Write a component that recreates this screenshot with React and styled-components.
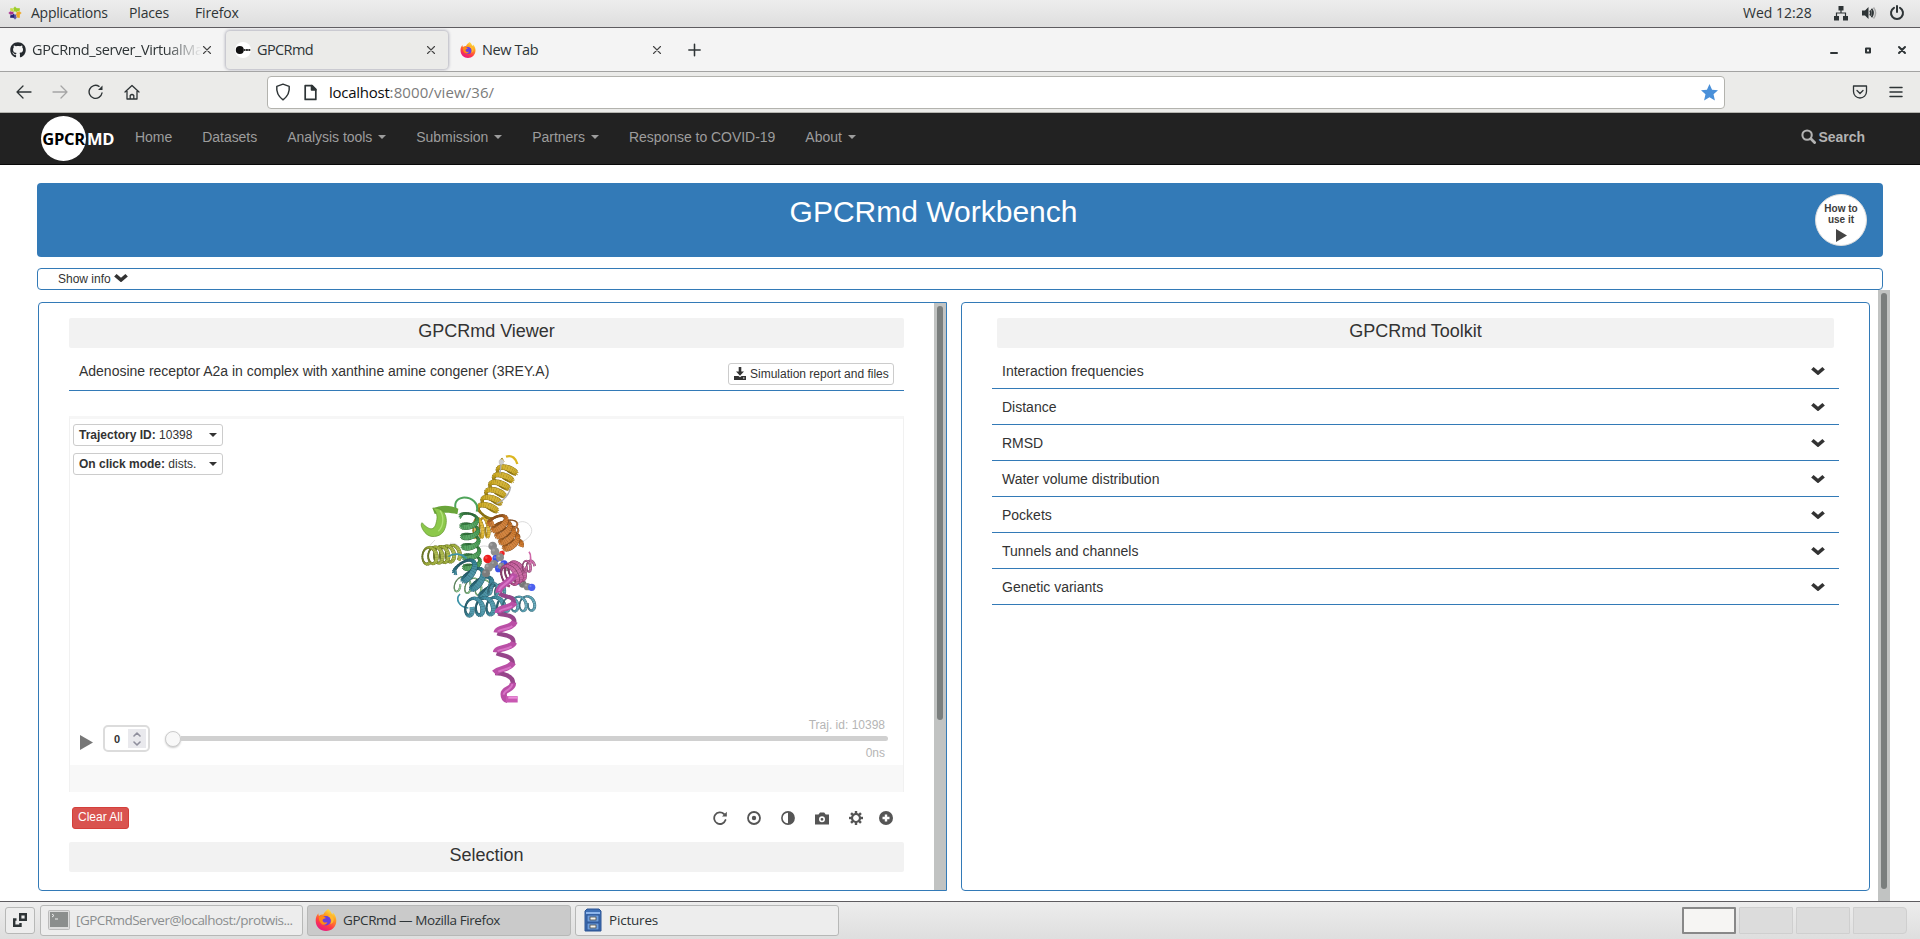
import React from "react";
import styled, { createGlobalStyle } from "styled-components";
import { FaGithub } from "react-icons/fa";

const BLUE = "#337ab7";
const UI_FONT = `"Open Sans", "Noto Sans", sans-serif`;
const WEB_FONT = `"Liberation Sans", Arial, sans-serif`;

const Global = createGlobalStyle`
  *, *::before, *::after { box-sizing: border-box; }
  html, body { margin: 0; padding: 0; background: #fff; overflow: hidden; }
  svg { display: block; flex: none; }
`;

const Desktop = styled.div`
  width: 1920px;
  height: 939px;
  display: flex;
  flex-direction: column;
  overflow: hidden;
  font-family: ${UI_FONT};
  color: #2e3436;
`;

/* ---------- desktop top bar ---------- */
const TopBar = styled.header`
  height: 28px;
  flex: none;
  display: flex;
  align-items: center;
  padding: 0 15px 2px 8px;
  background: linear-gradient(#ededed, #dedede);
  border-bottom: 1px solid #5e5c60;
  font-size: 14px;
`;
const MenuLabel = styled.span`
  width: ${(p) => p.$w}px;
  margin-left: ${(p) => p.$ml || 0}px;
  margin-right: ${(p) => p.$gap || 0}px;
  letter-spacing: ${(p) => p.$ls || 0}px;
  white-space: nowrap;
`;
const Spacer = styled.div`
  flex: ${(p) => (p.$w ? "none" : 1)};
  width: ${(p) => p.$w || 0}px;
`;
const Tray = styled.div`
  display: flex;
  align-items: center;
  gap: 12px;
`;

/* ---------- browser chrome ---------- */
const TabStrip = styled.div`
  height: 44px;
  flex: none;
  display: flex;
  align-items: center;
  background: #f4f4f4;
  border-bottom: 1px solid #a3a3a2;
  padding: 0 13px 0 1px;
`;
const Tab = styled.div`
  width: ${(p) => p.$w || 225}px;
  height: 38px;
  display: flex;
  align-items: center;
  padding: 0 ${(p) => p.$pr || 14}px 0 9px;
  margin-left: ${(p) => p.$ml || 0}px;
  gap: 6px;
  border-radius: 4px;
  font-size: 14.5px;
  background: ${(p) => (p.$active ? "#ebebe9" : "transparent")};
  box-shadow: ${(p) => (p.$active ? "0 0 3px 1px #b4b4be" : "none")};
`;
const TabTitle = styled.span`
  flex: 1;
  min-width: 0;
  white-space: nowrap;
  letter-spacing: ${(p) => p.$ls ?? -0.5}px;
  ${(p) => p.$fade && "mask-image: linear-gradient(90deg, #000 78%, transparent 100%); margin-right: -6px;"}
`;
const WindowButtons = styled.div`
  display: flex;
  align-items: center;
  gap: 24px;
`;
const UrlRow = styled.div`
  height: 41px;
  flex: none;
  display: flex;
  align-items: center;
  padding: 0 17px 0 16px;
  background: #ebebe9;
  border-bottom: 1px solid #b5b5b0;
`;
const NavIcons = styled.div`
  width: 251px;
  display: flex;
  gap: 20px;
`;
const UrlBox = styled.div`
  width: 1458px;
  height: 33px;
  display: flex;
  align-items: center;
  padding: 0 6px;
  background: #fff;
  border: 1px solid #b3b3ae;
  border-radius: 4px;
  font-size: 15px;
  color: #7b7b7b;
`;
const Url = styled.span`
  flex: 1;
  margin-left: 10px;
  letter-spacing: 0.1px;
  b { font-weight: 400; color: #0c0c0d; letter-spacing: -0.25px; }
`;

/* ---------- site ---------- */
const SiteNav = styled.nav`
  height: 52px;
  flex: none;
  display: flex;
  align-items: center;
  padding: 0 55px 4px 41px;
  background: #222;
  border-bottom: 1px solid #080808;
  font-family: ${WEB_FONT};
  font-size: 14px;
  color: #9d9d9d;
`;
const Logo = styled.div`
  display: flex;
  align-items: center;
  width: 79px;
  height: 45px;
  margin-top: 3px;
  font: 700 16.5px ${UI_FONT};
  letter-spacing: -0.3px;
  color: #fff;
`;
const LogoDisc = styled.span`
  width: 45px;
  height: 45px;
  border-radius: 50%;
  background: #fff;
  color: #000;
  display: flex;
  align-items: center;
  justify-content: center;
  margin-right: 1px;
`;
const NavLink = styled.a`
  display: flex;
  align-items: center;
  padding: 0 15px;
  white-space: nowrap;
  letter-spacing: -0.035px;
`;
const Caret = styled.i`
  border: 4px solid transparent;
  border-top-color: ${(p) => p.$color || "#9d9d9d"};
  border-bottom: 0;
  margin-left: ${(p) => p.$ml ?? 6}px;
`;
const SearchLink = styled(NavLink)`
  font-weight: 700;
  gap: 3px;
  padding: 0;
  color: #b3b3b3;
`;

const Page = styled.main`
  height: 736px;
  flex: none;
  display: flex;
  flex-direction: column;
  padding: 18px 0 0 37px;
  background: #fff;
  font-family: ${WEB_FONT};
  font-size: 14px;
  color: #333;
`;
const Banner = styled.section`
  width: 1846px;
  height: 74px;
  flex: none;
  display: flex;
  padding: 11px 16px 11px 15px;
  background: ${BLUE};
  border-radius: 4px;
`;
const BannerTitle = styled.h1`
  flex: 1;
  margin: 0;
  text-align: center;
  color: #fff;
  font: 400 30px/36px ${WEB_FONT};
`;
const HowTo = styled.button`
  width: 52px;
  height: 52px;
  border-radius: 50%;
  border: 1px solid #ddd;
  background: #fff;
  color: #3c3c3c;
  padding: 4px 0 0;
  font: 700 10px/11px ${WEB_FONT};
  display: flex;
  flex-direction: column;
  align-items: center;
  justify-content: center;
  svg { margin-top: 4px; }
`;
const InfoBox = styled.section`
  width: 1846px;
  height: 22px;
  flex: none;
  margin-top: 11px;
  padding: 0 20px 1px;
  display: flex;
  align-items: center;
  gap: 3px;
  border: 1px solid ${BLUE};
  border-radius: 4px;
  font-size: 12px;
  svg { margin-bottom: 2px; }
`;
const Workspace = styled.div`
  flex: 1;
  width: 1853px;
  display: flex;
  align-items: flex-start;
  padding-left: 1px;
`;
const Panel = styled.section`
  width: ${(p) => p.$w}px;
  height: 589px;
  margin: 12px ${(p) => p.$mr}px 0 0;
  display: flex;
  border: 1px solid ${BLUE};
  border-radius: ${(p) => (p.$scroll ? "4px 0 0 4px" : "4px")};
`;
const PanelBody = styled.div`
  flex: 1;
  min-width: 0;
  padding: 15px ${(p) => p.$pad}px 0;
`;
const ScrollTrack = styled.div`
  width: ${(p) => p.$w}px;
  align-self: stretch;
  display: flex;
  justify-content: center;
  padding-top: 3px;
  background: #c1c3c2;
`;
const ScrollThumb = styled.div`
  width: ${(p) => p.$w}px;
  height: ${(p) => p.$h}px;
  border-radius: 4px;
  background: #7a7e7d;
`;
const Heading = styled.h2`
  height: 30px;
  margin: ${(p) => p.$m || "0"};
  border-radius: 2px;
  background: #f2f2f2;
  text-align: center;
  font: 400 18px/27px ${WEB_FONT};
`;
const SystemRow = styled.div`
  height: 43px;
  display: flex;
  justify-content: space-between;
  padding: 0 10px;
  border-bottom: 1px solid ${BLUE};
  line-height: 46px;
  letter-spacing: -0.015px;
`;
const SmallButton = styled.button`
  width: ${(p) => p.$w}px;
  height: 22px;
  display: flex;
  align-items: center;
  padding: 0 5px ${(p) => p.$pb ?? 1}px;
  margin: ${(p) => p.$m || "0"};
  border: 1px solid ${(p) => (p.$danger ? "#d43f3a" : "#ccc")};
  border-radius: 3px;
  background: ${(p) => (p.$danger ? "#d9534f" : "#fff")};
  color: ${(p) => (p.$danger ? "#fff" : "#333")};
  font: 12px ${WEB_FONT};
  white-space: pre;
`;
const Viewer = styled.div`
  height: 376px;
  margin-top: 25px;
  border: 1px solid #f1f1f1;
  border-top: 3px solid #f6f6f6;
  border-bottom: 0;
  display: flex;
  flex-direction: column;
`;
const Stage = styled.div`
  height: 299px;
  display: flex;
  padding: 5px 3px 0;
`;
const StageControls = styled.div`
  width: 307px;
  display: flex;
  flex-direction: column;
  gap: 7px;
`;
const StageCanvas = styled.div`padding-top: 16px;`;
const Player = styled.div`
  height: 47px;
  display: flex;
  align-items: center;
  padding: 0 15px 6px 10px;
`;
const FrameInput = styled.div`
  width: 47px;
  height: 27px;
  margin: 0 15px 0 10px;
  display: flex;
  align-items: center;
  justify-content: flex-end;
  padding: 2px;
  border: 2px solid #dcdcdc;
  border-radius: 5px;
  font-weight: 700;
  font-size: 11px;
`;
const Spin = styled.div`
  width: 18px;
  height: 19px;
  margin-left: 8px;
  background: #e9e9ed;
  display: flex;
  flex-direction: column;
  align-items: center;
  justify-content: center;
  gap: 2px;
`;
const Timeline = styled.div`
  flex: 1;
  display: flex;
  flex-direction: column;
  font-size: 12px;
  line-height: 14px;
  color: #b5b5b5;
  text-align: right;
`;
const TimeText = styled.span`padding-right: 3px; height: 14px;`;
const Slider = styled.div`
  height: 14px;
  display: flex;
  align-items: center;
`;
const Knob = styled.div`
  width: 16px;
  height: 16px;
  border-radius: 50%;
  background: #f8f8f8;
  border: 1px solid #ccc;
  box-shadow: 0 1px 2px #ccc;
`;
const Rail = styled.div`
  flex: 1;
  height: 5px;
  border-radius: 0 3px 3px 0;
  background: #d0d0d0;
`;
const ViewerFoot = styled.div`
  height: 27px;
  background: #f8f8f8;
`;
const ActionRow = styled.div`
  height: 50px;
  display: flex;
  align-items: center;
  padding: 2px 11px 0 3px;
`;
const Actions = styled.div`
  display: flex;
  gap: 20px;
  color: #555;
  svg:last-child { margin-left: -4px; }
`;
const ToolRow = styled.div`
  height: 36px;
  display: flex;
  align-items: center;
  justify-content: space-between;
  padding: 0 14px 0 10px;
  border-bottom: 1px solid ${BLUE};
`;
const ToolList = styled.div`
  padding-top: 5px;
`;

/* ---------- task bar ---------- */
const TaskBar = styled.footer`
  height: 38px;
  flex: none;
  display: flex;
  align-items: center;
  padding: 0 13px 1px 5px;
  gap: 4px;
  background: linear-gradient(#ededed, #dedede);
  border-top: 1px solid #5e5c60;
`;
const Task = styled.div`
  width: ${(p) => p.$w}px;
  height: ${(p) => p.$h || 31}px;
  margin-right: ${(p) => p.$mr || 0}px;
  display: flex;
  align-items: center;
  gap: 6px;
  padding: 0 7px;
  border: 1px solid #b7b8b7;
  border-radius: 3px;
  background: ${(p) => (p.$active ? "#cacaca" : "#ededed")};
  color: ${(p) => (p.$dim ? "#8b8e8f" : "#2e3436")};
  font-size: 13.5px;
  letter-spacing: ${(p) => p.$ls ?? -0.2}px;
  white-space: nowrap;
`;
const Desk = styled.div`
  width: 54px;
  height: 27px;
  margin-left: -1px;
  border: ${(p) => (p.$on ? "2px solid #888" : "1px solid #cfcfcf")};
  background: ${(p) => (p.$on ? "#f6f5f3" : "#dcdcdc")};
  border-radius: ${(p) => (p.$last ? "0 4px 4px 0" : "1px")};
`;

/* ---------- icons ---------- */
const Line = ({ s = 16, vb = 16, w = 1.3, color = "#2e3436", children }) => (
  <svg width={s} height={s} viewBox={`0 0 ${vb} ${vb}`} fill="none" stroke={color} strokeWidth={w} strokeLinecap="round" strokeLinejoin="round">{children}</svg>
);
const CloseX = () => <Line s={10} vb={10} w={1.1} color="#444"><path d="M1.500 1.500l7 7M8.500 1.500l-7 7" /></Line>;
const Chevron = ({ w = 14 }) => (
  <svg width={w} height={w * 0.7} viewBox="0 0 14 10"><path d="M0 3.500L2.500 1l4.500 3.800L11.500 1 14 3.500 7 9.500z" fill="#333" /></svg>
);
const CentOS = () => (
  <svg width="14" height="14" viewBox="-7 -7 14 14">
    {["#9ccd2a", "#efa724", "#5a56a8", "#a83290"].map((c, i) => (
      <g key={c} transform={`rotate(${i * 90})`}>
        <rect x="-4.800" y="-4.800" width="4" height="4" fill={["#c8d94a", "#9ccd2a", "#efa724", "#262577"][i]} />
        <path d="M0-.8L-1.500-2.200V-4.200H-2.300L0-6.800L2.300-4.200H1.500V-2.200z" fill={c} stroke="#eee" strokeWidth=".4" />
      </g>
    ))}
  </svg>
);
const Firefox = ({ s = 16, id }) => (
  <svg width={s} height={s} viewBox="0 0 32 32">
    <defs>
      <linearGradient id={id} x1=".8" y1="0" x2=".3" y2="1">
        <stop offset="0" stopColor="#fff44f" /><stop offset=".35" stopColor="#ff9a1f" /><stop offset=".7" stopColor="#ff3b47" /><stop offset="1" stopColor="#e31587" />
      </linearGradient>
    </defs>
    <path d="M19 0c4 3 5 6 6 8 1-1 1-2 1-3 4 4 5 8 5 12 0 9-7 15-15 15S1 26 1 17c0-4 1-8 4-11 0 2 0 3 1 4 2-2 4-2 6-2 2-4 4-5 7-8z" fill={`url(#${id})`} />
    <circle cx="16" cy="17" r="7" fill="#6a3fe0" />
    <path d="M6 11c4-2 7 0 10 2-2 1-4 1-5 3 0 3 3 5 7 3-1 4-5 5-8 3-3-2-5-6-4-11z" fill="#ff8a16" />
    <path d="M19 10c5 3 6 8 3 12 4-1 6-5 5-9-1-4-4-5-8-3z" fill="#ffb92e" />
  </svg>
);
const SiteFavicon = () => (
  <svg width="16" height="16" viewBox="0 0 16 16"><circle cx="8" cy="8" r="8" fill="#fff" /><circle cx="4.800" cy="8" r="4" fill="#111" /><path d="M8.500 8h7" stroke="#333" strokeWidth="1.800" strokeDasharray="2 .4" /></svg>
);
const Cabinet = () => (
  <svg width="20" height="24" viewBox="0 0 20 24">
    <path d="M2 3L4 1h12l2 2v20H2z" fill="#3e6fb5" stroke="#2c5593" /><rect x="3" y="4" width="14" height="2" fill="#8eb5ea" />
    {[7, 15].map((y) => <g key={y}><rect x="4" y={y} width="12" height="7" fill="#6f9fde" stroke="#2c5593" /><rect x="7" y={y + 2} width="6" height="3" fill="#f5f5ee" stroke="#444" strokeWidth=".8" /></g>)}
  </svg>
);
const Terminal = () => (
  <svg width="22" height="20" viewBox="0 0 22 20"><rect x=".5" y=".5" width="21" height="19" rx="1" fill="#ddd" stroke="#bbb" /><rect x="2" y="2" width="18" height="15" fill="#8b8e8d" /><path d="M4 4l2 1.500-2 1.500M7 9h3" fill="none" stroke="#eee" /></svg>
);
const gearTeeth = Array.from({ length: 8 }, (_, i) => i * 45);

/* ---------- molecule ---------- */
const shade = (hex, k) => {
  const n = parseInt(hex.slice(1), 16);
  const f = (v) => Math.max(0, Math.min(255, Math.round(k > 0 ? v + (255 - v) * k : v * (1 + k))));
  return `rgb(${f(n >> 16)},${f((n >> 8) & 255)},${f(n & 255)})`;
};
function Helix({ a, b, r, turns, color, w = 9, depth = 9, phase = 0 }) {
  const dx = b[0] - a[0], dy = b[1] - a[1], len = Math.hypot(dx, dy);
  const ux = dx / len, uy = dy / len;
  const n = Math.round(turns * 24);
  const at = (i) => {
    const t = (i / 24) * Math.PI * 2 + phase;
    const k = i / n;
    const s = Math.sin(t) * r, c = Math.cos(t) * depth;
    return [a[0] + dx * k - uy * s + ux * c, a[1] + dy * k + ux * s + uy * c, Math.cos(t)];
  };
  const segs = [];
  for (let i = 0; i < n; i++) {
    const p = at(i), q = at(i + 1.2);
    segs.push({ d: `M${p[0].toFixed(1)} ${p[1].toFixed(1)}L${q[0].toFixed(1)} ${q[1].toFixed(1)}`, z: p[2] });
  }
  segs.sort((m, o) => m.z - o.z);
  const edge = shade(color, -0.42);
  return segs.map((g, i) => {
    const width = w * (0.66 + 0.34 * g.z);
    return (
      <g key={i}>
        <path d={g.d} stroke={edge} strokeWidth={width + 2} />
        <path d={g.d} stroke={shade(color, g.z > 0 ? g.z * 0.12 : g.z * 0.32)} strokeWidth={width} />
      </g>
    );
  });
}
const atoms = [
  [338, 318, 13, "#888"], [345, 335, 13, "#8e8e8e"], [366, 340, 8, "#e22"], [323, 357, 13, "#ee1c1c"], [348, 356, 11, "#3c50e8"],
  [360, 352, 12, "#8a8a8a"], [342, 372, 12, "#858585"], [326, 382, 13, "#8b8b8b"], [318, 400, 12, "#7c7c7c"], [356, 386, 11, "#3c50e8"],
  [372, 372, 11, "#3c50e8"], [364, 378, 10, "#8a8a8a"], [380, 385, 9, "#999"], [416, 424, 10, "#4256dd"], [428, 432, 11, "#777"], [442, 440, 11, "#888"], [455, 442, 11, "#4c60ef"],
];
const Molecule = () => (
  <svg width="200" height="280" viewBox="0 0 600 840" fill="none" strokeLinejoin="round">
    <path d="M415 248c15-8 35 0 40 20 3 18-20 38-42 40M300 320c15-5 30 0 40 8M165 300c-8 8-15 15-18 22M210 310c15-2 25 5 30 15" stroke="#d2d2d2" strokeWidth="2.500" />
    <Helix a={[225, 430]} b={[320, 445]} r={24} turns={3} color="#8fcf8f" w={4} depth={16} />
    <Helix a={[280, 265]} b={[325, 262]} r={30} turns={2.5} color="#dfb426" w={9} />
    <Helix a={[315, 222]} b={[390, 75]} r={28} turns={6.5} color="#cda91c" w={16} depth={10} phase={2} />
    <path d="M360 100l4-35M350 190c20-5 40-30 42-50" stroke="#aaa" strokeWidth="4" />
    <circle cx="364" cy="66" r="8" fill="#ccc" />
    <path d="M378 50c18-6 30 5 34 22" stroke="#dcb621" strokeWidth="7" />
    <path d="M290 215c8-25-15-44-42-42-20 3-28 18-18 45" stroke="#4fa45a" strokeWidth="6" />
    <path d="M235 206C210 194 180 194 158 206L164 222C185 217 212 217 232 223z" fill="#6aa53a" />
    <path d="M158 204C204 202 206 250 190 275 178 292 150 296 135 278 122 262 122 252 126 248 146 270 162 274 168 250 172 235 175 222 158 204z" fill="#8cc84b" stroke="#5f8f2c" strokeWidth="2" />
    <path d="M180 212c12 15 12 45-5 62" stroke="#b2e079" strokeWidth="4" />
    <Helix a={[266, 222]} b={[277, 392]} r={25} turns={5.5} color="#459c52" w={15} depth={12} phase={1} />
    <Helix a={[138, 348]} b={[225, 340]} r={25} turns={5} color="#a2b139" w={10} depth={17} phase={1} />
    <Helix a={[392, 240]} b={[403, 305]} r={18} turns={3.5} color="#cf7b38" w={5} />
    <Helix a={[243, 372]} b={[332, 460]} r={32} turns={3.5} color="#368599" w={17} depth={14} phase={1} />
    <path d="M205 350c15-12 40-10 55 5M240 462c-15 15-3 40 25 42" stroke="#3d93a8" strokeWidth="5" />
    <Helix a={[258, 502]} b={[372, 496]} r={26} turns={3.6} color="#4190a5" w={13} depth={18} />
    <Helix a={[372, 494]} b={[460, 490]} r={22} turns={3.5} color="#58a4b8" w={7} depth={16} />
    <Helix a={[325, 445]} b={[375, 452]} r={18} turns={2.5} color="#4d9aae" w={7} />
    {atoms.map(([x, y, r, c], i) => (
      <g key={i}><circle cx={x} cy={y} r={r} fill={c} /><circle cx={x - r / 3} cy={y - r / 3} r={r / 3.2} fill="#fff" opacity=".22" /></g>
    ))}
    <Helix a={[347, 234]} b={[402, 322]} r={27} turns={4.8} color="#cc7427" w={17} depth={12} phase={0.5} />
    <Helix a={[382, 410]} b={[415, 392]} r={32} turns={3} color="#c4579a" w={11} depth={18} phase={2} />
    <Helix a={[430, 380]} b={[455, 378]} r={17} turns={2} color="#cf68a8" w={6} />
    <path d="M447 335c10 12 0 22 8 36" stroke="#cf68a8" strokeWidth="5" />
    <path d="M358 460C375 474 404 466 402 490M355 520c20 7 50 4 48 28M352 580c18 7 52 4 48 30M350 640c15 7 52 6 48 34M345 699c20 0 56 7 54 32" stroke="#96458a" strokeWidth="13" />
    <path d="M405 402c-15 28-50 32-49 56M403 488c-10 20-48 12-50 31M404 545c-8 22-52 17-54 33M402 607c-8 20-52 15-54 30M399 668c-10 20-40 15-56 31M399 728c0 22-28 18-28 34 0 12 4 16 12 18" stroke="#ba4fa6" strokeWidth="19" />
    <path d="M399 408c-15 25-40 28-42 45M396 498c-12 10-34 8-38 17M397 558c-10 10-40 10-43 17M395 619c-10 9-36 9-42 15M393 680c-10 8-20 8-38 15M397 732c-2 18-26 18-26 32" stroke="#d873c6" strokeWidth="6" />
    <path d="M378 778h35" stroke="#c958b2" strokeWidth="19" /><path d="M385 773h28" stroke="#ec8cda" strokeWidth="6" />
  </svg>
);

const tools = ["Interaction frequencies", "Distance", "RMSD", "Water volume distribution", "Pockets", "Tunnels and channels", "Genetic variants"];
const links = [["Home"], ["Datasets"], ["Analysis tools", 1], ["Submission", 1], ["Partners", 1], ["Response to COVID-19"], ["About", 1]];

export default function App() {
  return (
    <Desktop>
      <Global />
      <TopBar>
        <CentOS />
        <MenuLabel $w={78} $gap={20} $ls={-0.25} $ml={9}>Applications</MenuLabel>
        <MenuLabel $w={42} $gap={24} $ls={-0.15}>Places</MenuLabel>
        <MenuLabel $w={60} $ls={-0.15}>Firefox</MenuLabel>
        <Spacer />
        <MenuLabel $w={71} $gap={19} $ls={0}>Wed 12:28</MenuLabel>
        <Tray>
          <svg width="16" height="16" viewBox="0 0 16 16" fill="#2e3436"><path d="M5.500 1h5v4.500h-5zM1 11h5v4.500H1zM10 11h5v4.500h-5z" /><path d="M8 5v3M3.500 11V8h9v3" fill="none" stroke="#2e3436" strokeWidth="1.200" /></svg>
          <svg width="16" height="16" viewBox="0 0 16 16" fill="#2e3436"><path d="M1 5.500h3L7.500 2v12L4 10.500H1z" /><path d="M9 5.500q1.800 2.500 0 5M10.500 3.800q3 4.200 0 8.400" fill="none" stroke="#2e3436" strokeWidth="1.800" /><path d="M12.500 2.500q4.200 5.500 0 11" fill="none" stroke="#aaa" strokeWidth="1.500" /></svg>
          <Line w={2}><path d="M5 2.800a6 6 0 1 0 6 0M8 1v6" /></Line>
        </Tray>
      </TopBar>

      <TabStrip>
        <Tab $w={225}>
          <FaGithub size={16} color="#24292e" />
          <TabTitle $fade $ls={-0.4}>GPCRmd_server_VirtualMa</TabTitle>
          <CloseX />
        </Tab>
        <Tab $active $w={222} $pr={12}>
          <SiteFavicon />
          <TabTitle $ls={-0.6}>GPCRmd</TabTitle>
          <CloseX />
        </Tab>
        <Tab $w={225} $ml={3} $pr={14}>
          <Firefox id="ff-tab" />
          <TabTitle $ls={-0.4}>New Tab</TabTitle>
          <CloseX />
        </Tab>
        <Line s={37} vb={36} w={1.5}><path d="M18 13v11M12.500 18.500h11" /></Line>
        <Spacer />
        <WindowButtons>
          <Line s={10} vb={10} w={2}><path d="M2 8h6" /></Line>
          <Line s={10} vb={10} w={2}><path d="M3 3.500h4v4H3z" /></Line>
          <Line s={10} vb={10} w={2}><path d="M2 2l6 6M8 2l-6 6" /></Line>
        </WindowButtons>
      </TabStrip>

      <UrlRow>
        <NavIcons>
          <Line><path d="M15 8H1M7 2L1 8l6 6" /></Line>
          <Line color="#a5a5a5"><path d="M1 8h14M9 2l6 6-6 6" /></Line>
          <Line w={1.4}><path d="M14 9A6.500 6.500 0 1 1 11 2.300" /><path d="M10 6h4.500V1.500z" fill="#2e3436" stroke="none" /></Line>
          <Line><path d="M1 8l7-6.500L15 8M3 7v8h10V7M6.200 15v-3.500q1.800-2 3.600 0V15" /></Line>
        </NavIcons>
        <UrlBox>
          <Line s={18} vb={16} w={1.3}><path d="M8 1l5.500 2c.6 5-1.500 9-5.500 12C4 12 1.900 8 2.500 3z" /></Line>
          <Spacer $w={10} />
          <Line s={17} vb={16} w={1.6}><path d="M3 1.500h6.500L13 5v9.500H3z" /><path d="M9 1.500V5.500h4z" fill="#2e3436" /></Line>
          <Url><b>localhost</b>:8000/view/36/</Url>
          <svg width="17" height="17" viewBox="0 0 16 16"><path d="M8 0l2.400 5.300 5.600.5-4.200 3.900L13.100 15.500 8 12.500 2.900 15.500 4.200 9.700 0 5.800l5.600-.5z" fill="#4a90d9" /></svg>
        </UrlBox>
        <Spacer />
        <Line s={16}><path d="M1.500 2h13v5.500a6.500 6.500 0 0 1-13 0zM5 6.500l3 3 3-3" /></Line>
        <Spacer $w={21} />
        <Line s={14} vb={14} w={1.5}><path d="M1 2.500h12M1 7h12M1 11.500h12" /></Line>
      </UrlRow>

      <SiteNav>
        <Logo><LogoDisc>GPCR</LogoDisc>MD</Logo>
        {links.map(([label, menu]) => (
          <NavLink key={label}>{label}{menu && <Caret />}</NavLink>
        ))}
        <Spacer />
        <SearchLink>
          <Line s={15} w={2.2} color="#b3b3b3"><circle cx="6.500" cy="6.500" r="5" /><path d="M10.500 10.500l4 4" strokeWidth="3" /></Line>
          Search
        </SearchLink>
      </SiteNav>

      <Page>
        <Banner>
          <BannerTitle>GPCRmd Workbench</BannerTitle>
          <HowTo>
            <span>How to</span><span>use it</span>
            <svg width="11" height="13" viewBox="0 0 11 13"><path d="M0 0l11 6.500L0 13z" fill="#444" /></svg>
          </HowTo>
        </Banner>
        <InfoBox>Show info <Chevron /></InfoBox>
        <Workspace>
          <Panel $w={909} $mr={14} $scroll>
            <PanelBody $pad={30}>
              <Heading>GPCRmd Viewer</Heading>
              <SystemRow>
                Adenosine receptor A2a in complex with xanthine amine congener (3REY.A)
                <SmallButton $w={166} $m="15px 0 0">
                  <svg width="12" height="13" viewBox="0 0 12 13" fill="#333" style={{ marginRight: 4 }}><path d="M4.700 0h2.600v4.500h2.700L6 8.800 2 4.500h2.700zM0 9h4.500L6 10.300 7.500 9H12V13H0z" /><path d="M9 11h1.500" stroke="#fff" /></svg>
                  Simulation report and files
                </SmallButton>
              </SystemRow>
              <Viewer>
                <Stage>
                  <StageControls>
                    <SmallButton $w={150}><b>Trajectory ID:</b> 10398<Caret $color="#333" $ml={17} /></SmallButton>
                    <SmallButton $w={150}><b>On click mode:</b> dists.<Caret $color="#333" $ml={13} /></SmallButton>
                  </StageControls>
                  <StageCanvas><Molecule /></StageCanvas>
                </Stage>
                <Player>
                  <svg width="13" height="15" viewBox="0 0 13 15" style={{ marginTop: 8 }}><path d="M0 0l13 7.500L0 15z" fill="#777" /></svg>
                  <FrameInput>0
                    <Spin>
                      <Line s={8} vb={8} w={1.6} color="#8f8f9d"><path d="M1 6l3-3 3 3" /></Line>
                      <Line s={8} vb={8} w={1.6} color="#8f8f9d"><path d="M1 2l3 3 3-3" /></Line>
                    </Spin>
                  </FrameInput>
                  <Timeline>
                    <TimeText>Traj. id: 10398</TimeText>
                    <Slider><Knob /><Rail /></Slider>
                    <TimeText>0ns</TimeText>
                  </Timeline>
                </Player>
                <ViewerFoot />
              </Viewer>
              <ActionRow>
                <SmallButton $danger $w={57} $pb={2}>Clear All</SmallButton>
                <Spacer />
                <Actions>
                  <Line s={14} vb={14} w={1.8} color="#555"><path d="M12.500 9A5.800 5.800 0 1 1 11 3" /><path d="M9 5.500h4.800V.8z" fill="#555" stroke="none" /></Line>
                  <Line s={14} vb={14} w={1.8} color="#555"><circle cx="7" cy="7" r="6" /><circle cx="7" cy="7" r="2.200" fill="#555" stroke="none" /></Line>
                  <Line s={14} vb={14} w={1.6} color="#555"><circle cx="7" cy="7" r="6.100" /><path d="M7 1a6 6 0 0 1 0 12z" fill="#555" stroke="none" /></Line>
                  <svg width="14" height="14" viewBox="0 0 14 14"><path d="M0 3.500h3.500L5 1.500h4.200l1.500 2H14V13.500H0z" fill="#555" /><circle cx="7" cy="8.300" r="2.200" fill="none" stroke="#fff" strokeWidth="1.600" /></svg>
                  <svg width="14" height="14" viewBox="-7 -7 14 14">{gearTeeth.map((d) => <rect key={d} x="-1.200" y="-7" width="2.400" height="4" fill="#555" transform={`rotate(${d})`} />)}<circle r="4" fill="none" stroke="#555" strokeWidth="2.200" /></svg>
                  <svg width="14" height="14" viewBox="0 0 14 14"><circle cx="7" cy="7" r="7" fill="#555" /><path d="M7 3.500v7M3.500 7h7" stroke="#fff" strokeWidth="2.400" /></svg>
                </Actions>
              </ActionRow>
              <Heading>Selection</Heading>
            </PanelBody>
            <ScrollTrack $w={12}><ScrollThumb $w={6} $h={414} /></ScrollTrack>
          </Panel>
          <Panel $w={909} $mr={8}>
            <PanelBody $pad={30}>
              <Heading $m="0 5px">GPCRmd Toolkit</Heading>
              <ToolList>
                {tools.map((t) => <ToolRow key={t}>{t}<Chevron /></ToolRow>)}
              </ToolList>
            </PanelBody>
          </Panel>
          <ScrollTrack $w={12}><ScrollThumb $w={6} $h={596} /></ScrollTrack>
        </Workspace>
      </Page>

      <TaskBar>
        <Task $w={30} $h={27} $mr={1}>
          <svg width="14" height="14" viewBox="0 0 14 14" fill="none" stroke="#2e3436" strokeWidth="2.400"><path d="M7.200 1.200h5.600v5.600H7.200zM3.500 6.500H1.200v6.300H7.500V10" /></svg>
        </Task>
        <Task $w={263} $dim $ls={-0.53}><Terminal />[GPCRmdServer@localhost:/protwis...</Task>
        <Task $w={264} $active $ls={-0.42}><Firefox s={22} id="ff-task" />GPCRmd — Mozilla Firefox</Task>
        <Task $w={264}><Cabinet />Pictures</Task>
        <Spacer />
        <Desk $on /><Desk /><Desk /><Desk $last />
      </TaskBar>
    </Desktop>
  );
}
